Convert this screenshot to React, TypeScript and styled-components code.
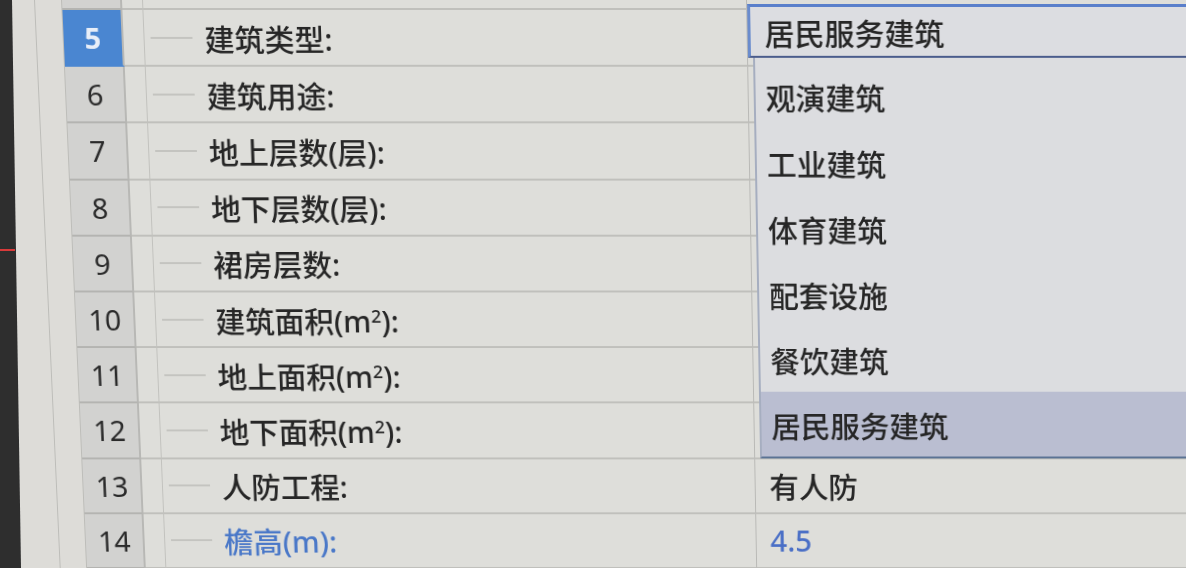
import React from "react";
import styled, {createGlobalStyle} from "styled-components";

interface RowData {
    num: number;
    label: React.ReactNode;
    value?: string;
    blue?: boolean;
}

const ROWS: RowData[] = [
    {num: 5, label: "建筑类型:"},
    {num: 6, label: "建筑用途:"},
    {num: 7, label: "地上层数(层):"},
    {num: 8, label: "地下层数(层):"},
    {num: 9, label: "裙房层数:"},
    {num: 10, label: <>建筑面积(m<sup>2</sup>):</>},
    {num: 11, label: <>地上面积(m<sup>2</sup>):</>},
    {num: 12, label: <>地下面积(m<sup>2</sup>):</>},
    {num: 13, label: "人防工程:", value: "有人防"},
    {num: 14, label: "檐高(m):", value: "4.5", blue: true},
];

const OPTIONS = ["观演建筑", "工业建筑", "体育建筑", "配套设施", "餐饮建筑", "居民服务建筑"];

function EmptyRow(props: { height: number }) {
    return (
        <Row $height={props.height}>
            <GutterCell/>
            <GutterCell/>
            <HeaderCell $active={false}/>
            <SpacerCell/>
            <LabelCell/>
            <ValueCell/>
        </Row>
    );
}

function App() {
    const selected = "居民服务建筑";

    return (
        <>
            <GlobalStyle/>
            <Screen>
                <Sheet>
                    <EmptyRow height={10}/>
                    {ROWS.map(r =>
                        <Row key={r.num} $height={57.2}>
                            <GutterCell/>
                            <GutterCell/>
                            <HeaderCell $active={r.num === 5}>{r.num}</HeaderCell>
                            <SpacerCell/>
                            <LabelCell>
                                <TreeDash/>
                                <LabelText $blue={!!r.blue}>{r.label}</LabelText>
                            </LabelCell>
                            <ValueCell>
                                {r.value && <ValueText $blue={!!r.blue}>{r.value}</ValueText>}
                            </ValueCell>
                        </Row>
                    )}
                    <EmptyRow height={40}/>

                    <Dropdown>
                        <EditorBox>{selected}</EditorBox>
                        <OptionList>
                            {OPTIONS.map(o =>
                                <OptionItem key={o} $highlight={o === selected}>{o}</OptionItem>
                            )}
                        </OptionList>
                    </Dropdown>
                </Sheet>
                <Bezel/>
                <RedMark/>
            </Screen>
        </>
    );
}

/**
 * Styled Components
 */
const GlobalStyle = createGlobalStyle`
    html, body {
        margin: 0;
        padding: 0;
        background: #dddcd8;
        overflow: hidden;
    }
    body {
        font-family: "Noto Sans", "Noto Sans CJK SC", sans-serif;
        color: #262626;
    }
`;

const Screen = styled("div")`
    position: relative;
    width: 1186px;
    height: 568px;
    overflow: hidden;
    background: #dddcd8;
`;

const Sheet = styled("div")`
    position: relative;
    margin-left: -14px;
    width: 1226px;
    display: flex;
    flex-direction: column;
    background: #dcdcd7;
    transform-origin: 100% 0;
    transform: perspective(1000px) rotateX(-2.2deg);
`;

const Row = styled("div")<{ $height: number }>`
    display: grid;
    grid-template-columns: 49px 27px 60px 21px 604px 1fr;
    height: ${p => p.$height}px;
    flex-shrink: 0;
`;

const GutterCell = styled("div")`
    background: #dddcd8;
    border-right: 1px solid #bdbdb9;
`;

const HeaderCell = styled("div")<{ $active: boolean }>`
    display: flex;
    align-items: center;
    justify-content: center;
    background: ${p => p.$active ? "#4a86d1" : "#d2d2d0"};
    color: ${p => p.$active ? "#e8eef8" : "#2a2a2a"};
    font-weight: ${p => p.$active ? 700 : 400};
    font-size: 29px;
    border-bottom: 2px solid ${p => p.$active ? "#4a86d1" : "#b4b4b1"};
    border-right: 2px solid #b8b8b5;
`;

const SpacerCell = styled("div")`
    background: #dededa;
    border-bottom: 2px solid #c0c0bc;
    border-right: 1px solid #c2c2be;
`;

const LabelCell = styled("div")`
    display: flex;
    align-items: center;
    background: #dededa;
    border-bottom: 2px solid #c0c0bc;
    border-right: 1px solid #b9b9b6;
`;

const TreeDash = styled("span")`
    width: 42px;
    height: 2px;
    margin-left: 6px;
    background: #c4c4c0;
`;

const LabelText = styled("span")<{ $blue: boolean }>`
    margin-left: 12px;
    font-size: 30px;
    font-weight: 500;
    color: ${p => p.$blue ? "#4a78c8" : "#262626"};
    white-space: nowrap;
    sup {
        font-size: 18px;
        vertical-align: 10px;
        line-height: 0;
    }
`;

const ValueCell = styled("div")`
    display: flex;
    align-items: center;
    background: #dededa;
    border-bottom: 2px solid #c0c0bc;
`;

const ValueText = styled("span")<{ $blue: boolean }>`
    margin-left: 14px;
    font-size: 30px;
    font-weight: 500;
    color: ${p => p.$blue ? "#4a6fc6" : "#262626"};
`;

const Dropdown = styled("div")`
    position: absolute;
    left: 761px;
    top: 4px;
    right: 0;
    display: flex;
    flex-direction: column;
`;

const EditorBox = styled("div")`
    height: 49px;
    display: flex;
    align-items: center;
    padding-left: 14px;
    font-size: 30px;
    font-weight: 500;
    background: #dcdde1;
    border-top: 3px solid #5a7fcb;
    border-left: 3px solid #6a8ccd;
    border-bottom: 2px solid #4a5c8c;
`;

const OptionList = styled("div")`
    display: flex;
    flex-direction: column;
    margin-left: 5px;
    padding-top: 5px;
    background: #dcdde0;
    border-left: 2px solid #a6aec0;
    border-bottom: 2px solid #5b7394;
`;

const OptionItem = styled("div")<{ $highlight: boolean }>`
    height: 67px;
    display: flex;
    align-items: center;
    padding-left: 10px;
    font-size: 30px;
    font-weight: 500;
    background: ${p => p.$highlight ? "#babed1" : "transparent"};
`;

const Bezel = styled("div")`
    position: absolute;
    left: 0;
    top: 0;
    width: 22px;
    height: 568px;
    background: #2e2e2e;
    clip-path: polygon(0 0, 12px 0, 21px 100%, 0 100%);
`;

const RedMark = styled("div")`
    position: absolute;
    left: 0;
    top: 249px;
    width: 15px;
    height: 2px;
    background: #d83a3a;
`;

export default App;
